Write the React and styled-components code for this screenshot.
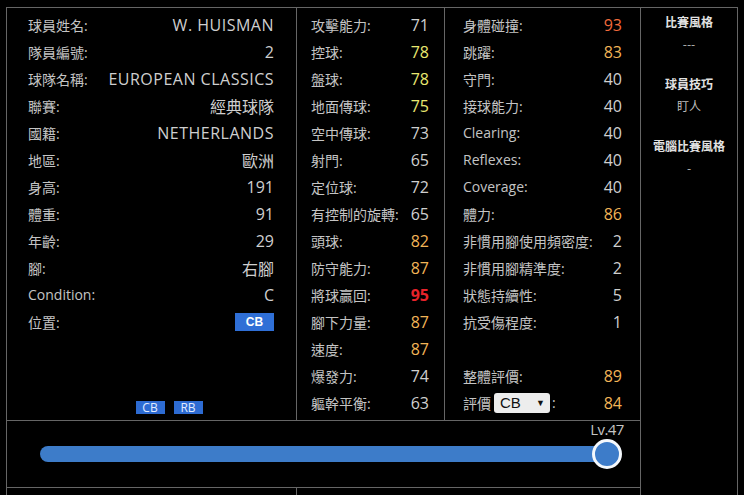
import React from 'react'
import styled, { createGlobalStyle } from 'styled-components'

const GlobalStyle = createGlobalStyle`
    html, body {
        margin: 0;
        padding: 0;
        background: #000;
        overflow: hidden;
    }
    body {
        font-family: 'Open Sans', 'Noto Sans CJK TC', sans-serif;
        color: #cbcbcb;
    }
`

const tones = {
    normal: '#cfcfcf',
    yellow: '#e9e870',
    orange: '#f2b457',
    hot: '#f26b3c',
    red: '#e8232b',
}

const Page = styled.div`
    padding: 7px 0 0 6px;
    width: 744px;
    height: 495px;
    box-sizing: border-box;
    background: #000;
`

const Board = styled.div`
    display: grid;
    grid-template-columns: 289px 147px 195px 96px;
    grid-template-rows: 412px 66px 20px;
    gap: 1px;
    padding: 1px;
    width: max-content;
    background: #666;
`

const Cell = styled.div`
    background: #000;
    min-width: 0;
`

const StatList = styled(Cell)`
    display: flex;
    flex-direction: column;
    padding: ${p => p.$pad};
`

const Row = styled.div`
    display: flex;
    align-items: center;
    justify-content: space-between;
    height: 27px;
    flex-shrink: 0;
`

const Label = styled.span`
    font-size: 14px;
    color: #c4c4c4;
    white-space: nowrap;
    display: flex;
    align-items: center;
`

const Value = styled.span`
    font-size: 16px;
    letter-spacing: ${p => (p.$wide ? '0.5px' : '0')};
    color: ${p => tones[p.$tone || 'normal']};
    font-weight: ${p => (p.$tone === 'red' ? 700 : 400)};
    white-space: nowrap;
`

const PosBadge = styled.span`
    display: inline-flex;
    align-items: center;
    justify-content: center;
    width: 39px;
    height: 18px;
    background: #2f6fd6;
    color: #fff;
    font-size: 12px;
    font-weight: 700;
    font-family: 'Liberation Sans', sans-serif;
`

const Spacer = styled.div`
    flex: 1;
`

const SmallBadges = styled.div`
    display: flex;
    justify-content: center;
    gap: 9px;
    padding-left: 36px;
    margin-bottom: 6px;
`

const SmallBadge = styled.span`
    display: inline-flex;
    align-items: center;
    justify-content: center;
    width: 29px;
    height: 13px;
    background: #2d6bd2;
    color: #e2ecff;
    font-size: 12px;
    line-height: 13px;
`

const Select = styled.span`
    display: inline-flex;
    align-items: center;
    justify-content: space-between;
    width: 56px;
    height: 20px;
    box-sizing: border-box;
    margin: 0 2px 0 3px;
    padding: 0 5px 0 6px;
    background: #ededed;
    border-radius: 3px;
    color: #111;
    font-family: 'Liberation Sans', sans-serif;
    font-size: 15px;
`

const Arrow = styled.span`
    font-size: 9px;
`

const Side = styled(Cell)`
    grid-row: 1 / span 3;
    grid-column: 4;
    display: flex;
    flex-direction: column;
    align-items: center;
    padding-top: 3px;
`

const SideBlock = styled.div`
    display: flex;
    flex-direction: column;
    align-items: center;
    margin-bottom: 18px;
`

const SideTitle = styled.div`
    font-family: 'Noto Sans CJK TC', sans-serif;
    font-size: 12px;
    font-weight: 700;
    color: #e2e2e2;
    line-height: 22px;
`

const SideValue = styled.div`
    font-family: 'Noto Sans CJK TC', sans-serif;
    font-size: 12px;
    color: #bdbdbd;
    line-height: 22px;
`

const SliderCell = styled(Cell)`
    grid-column: 1 / span 3;
    padding: 25px 33px 0;
`

const Track = styled.div`
    position: relative;
    height: 16px;
    border-radius: 8px 0 0 8px;
    background: #3d7cc9;
`

const Thumb = styled.div`
    position: absolute;
    right: -15px;
    top: -7px;
    width: 30px;
    height: 30px;
    box-sizing: border-box;
    border-radius: 50%;
    border: 3px solid #f4f8fc;
    background: #3d7cc9;
`

const Level = styled.div`
    position: absolute;
    right: -20px;
    top: -27px;
    width: 40px;
    text-align: center;
    font-size: 15px;
    letter-spacing: -0.6px;
    color: #c4c4c4;
`

const BottomLeft = styled(Cell)`
    grid-column: 1;
`

const BottomRest = styled(Cell)`
    grid-column: 2 / span 2;
`

const profile = [
    ['球員姓名:', 'W. HUISMAN', true],
    ['隊員編號:', '2'],
    ['球隊名稱:', 'EUROPEAN CLASSICS', true],
    ['聯賽:', '經典球隊'],
    ['國籍:', 'NETHERLANDS', true],
    ['地區:', '歐洲'],
    ['身高:', '191'],
    ['體重:', '91'],
    ['年齡:', '29'],
    ['腳:', '右腳'],
    ['Condition:', 'C'],
]

const skills = [
    ['攻擊能力:', 71],
    ['控球:', 78, 'yellow'],
    ['盤球:', 78, 'yellow'],
    ['地面傳球:', 75, 'yellow'],
    ['空中傳球:', 73],
    ['射門:', 65],
    ['定位球:', 72],
    ['有控制的旋轉:', 65],
    ['頭球:', 82, 'orange'],
    ['防守能力:', 87, 'orange'],
    ['將球贏回:', 95, 'red'],
    ['腳下力量:', 87, 'orange'],
    ['速度:', 87, 'orange'],
    ['爆發力:', 74],
    ['軀幹平衡:', 63],
]

const physical = [
    ['身體碰撞:', 93, 'hot'],
    ['跳躍:', 83, 'orange'],
    ['守門:', 40],
    ['接球能力:', 40],
    ['Clearing:', 40],
    ['Reflexes:', 40],
    ['Coverage:', 40],
    ['體力:', 86, 'orange'],
    ['非慣用腳使用頻密度:', 2],
    ['非慣用腳精準度:', 2],
    ['狀態持續性:', 5],
    ['抗受傷程度:', 1],
]

const side = [
    ['比賽風格', '---'],
    ['球員技巧', '盯人'],
    ['電腦比賽風格', '-'],
]

const App = () => {
    return (
        <Page>
            <GlobalStyle />
            <Board>
                <StatList $pad="3px 22px 0 21px">
                    {profile.map(([label, value, wide]) => (
                        <Row key={label}>
                            <Label>{label}</Label>
                            <Value $wide={wide}>{value}</Value>
                        </Row>
                    ))}
                    <Row>
                        <Label>位置:</Label>
                        <PosBadge>CB</PosBadge>
                    </Row>
                    <Spacer />
                    <SmallBadges>
                        <SmallBadge>CB</SmallBadge>
                        <SmallBadge>RB</SmallBadge>
                    </SmallBadges>
                </StatList>

                <StatList $pad="3px 15px 0 14px">
                    {skills.map(([label, value, tone]) => (
                        <Row key={label}>
                            <Label>{label}</Label>
                            <Value $tone={tone}>{value}</Value>
                        </Row>
                    ))}
                </StatList>

                <StatList $pad="3px 18px 0 18px">
                    {physical.map(([label, value, tone]) => (
                        <Row key={label}>
                            <Label>{label}</Label>
                            <Value $tone={tone}>{value}</Value>
                        </Row>
                    ))}
                    <Row />
                    <Row>
                        <Label>整體評價:</Label>
                        <Value $tone="orange">89</Value>
                    </Row>
                    <Row>
                        <Label>
                            評價
                            <Select>
                                CB <Arrow>▼</Arrow>
                            </Select>
                            :
                        </Label>
                        <Value $tone="orange">84</Value>
                    </Row>
                </StatList>

                <Side>
                    {side.map(([title, value]) => (
                        <SideBlock key={title}>
                            <SideTitle>{title}</SideTitle>
                            <SideValue>{value}</SideValue>
                        </SideBlock>
                    ))}
                </Side>

                <SliderCell>
                    <Track>
                        <Level>Lv.47</Level>
                        <Thumb />
                    </Track>
                </SliderCell>

                <BottomLeft />
                <BottomRest />
            </Board>
        </Page>
    )
}

export default App
